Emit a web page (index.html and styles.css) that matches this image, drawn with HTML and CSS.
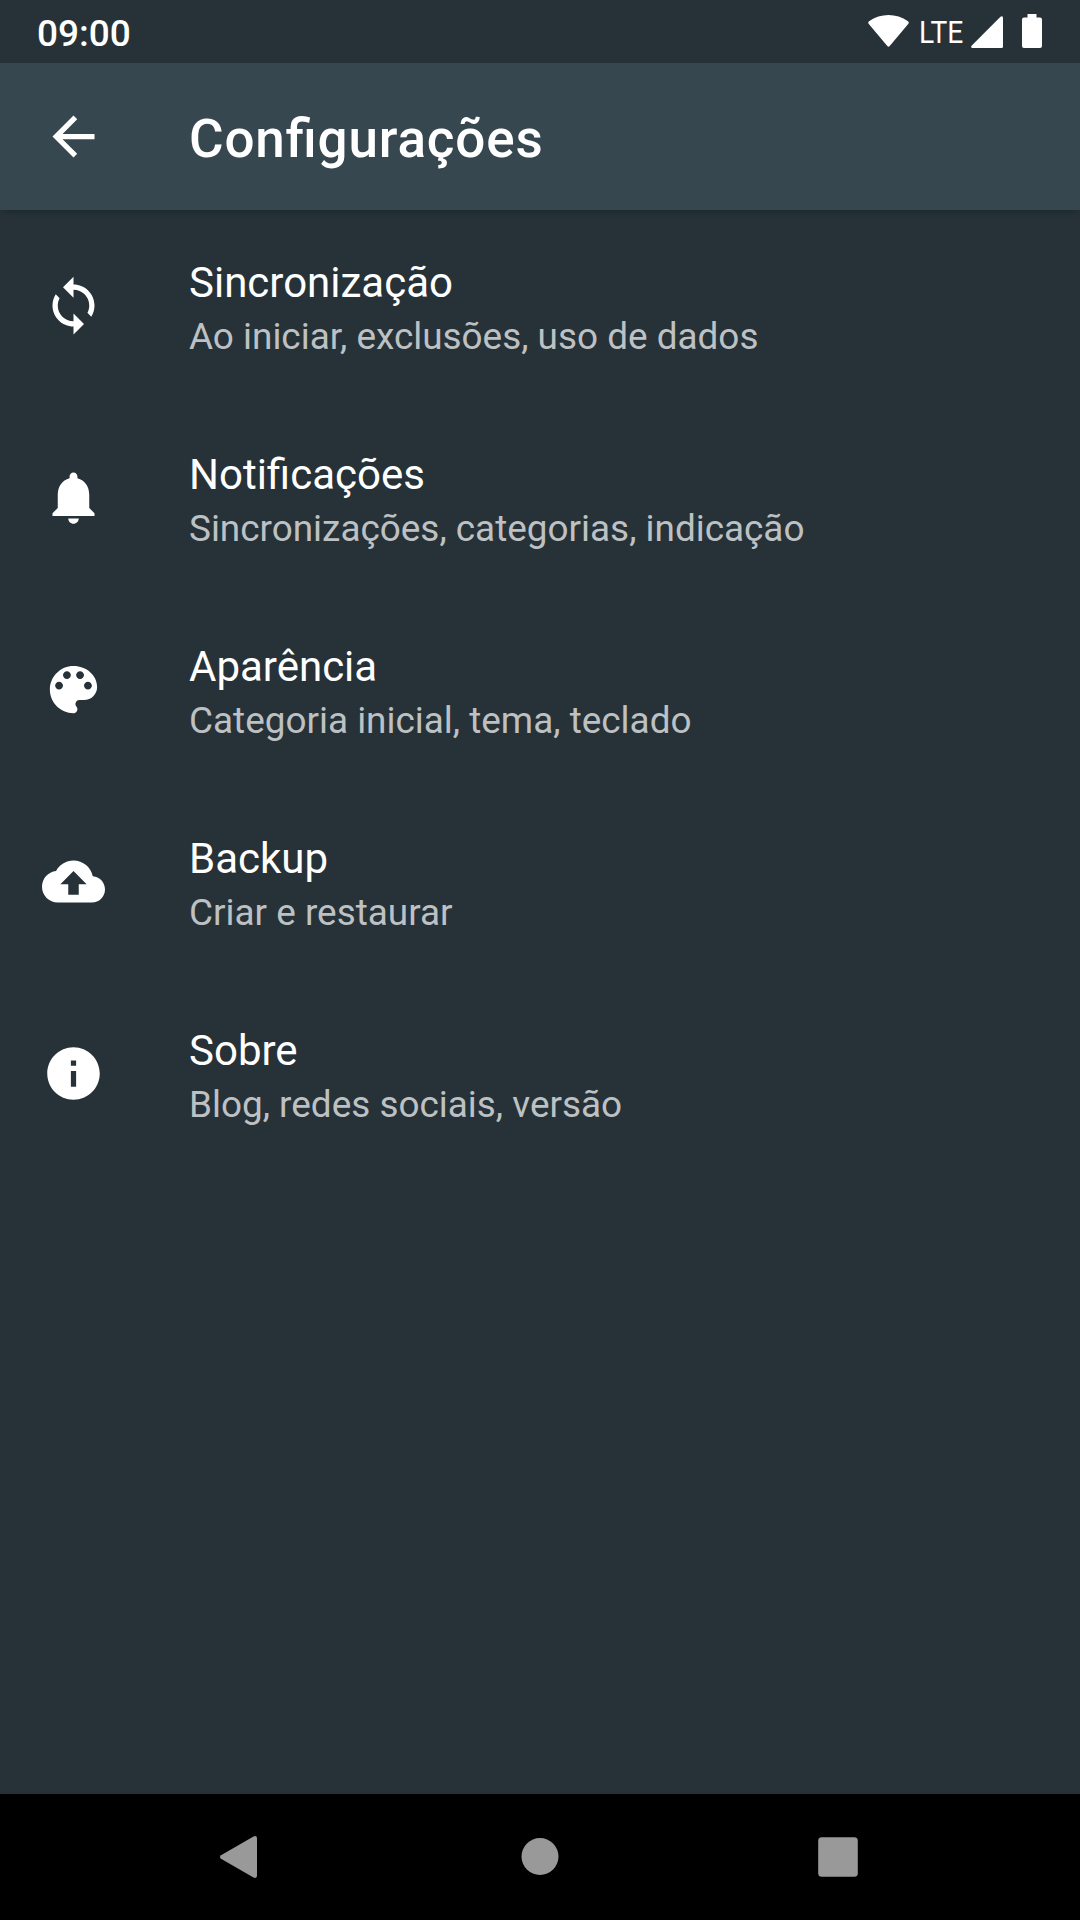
FILE: index.html
```html
<!DOCTYPE html>
<html lang="pt-BR">
<head>
<meta charset="utf-8">
<title>Configurações</title>
<link rel="stylesheet" href="styles.css">
</head>
<body>
<div class="screen">
  <div class="status">
    <span class="clock">09:00</span>
    <div class="signals">
      <svg class="wifi" viewBox="0 0 41 32"><path d="M.8 8.900Q-.5 7.500 1 6.300C12.500-2 28.500-2 40 6.300Q41.500 7.500 40.200 8.900L21.700 31Q20.500 32.300 19.300 31Z"/></svg>
      <span class="lte">LTE</span>
      <svg class="cell" viewBox="0 0 32 32"><path d="M1.500 32Q-.8 31.500.8 29.500L29.500.8Q31.500-.5 32 1.500V30.500Q32 32 30.500 32Z"/></svg>
      <svg class="battery" viewBox="0 0 20 34"><path d="M5.500 0h9v3.500h3.500q2 0 2 2v26.500q0 2-2 2H2q-2 0-2-2V5.500q0-2 2-2h3.500Z"/></svg>
    </div>
  </div>
  <header class="toolbar">
    <svg class="icon" viewBox="0 0 24 24"><path d="M20 11H7.830l5.590-5.590L12 4l-8 8 8 8 1.410-1.410L7.830 13H20v-2z"/></svg>
    <h1>Configurações</h1>
  </header>
  <main class="list">
    <div class="item">
      <svg class="icon" viewBox="0 0 24 24"><path d="M12 4V1L8 5l4 4V6c3.310 0 6 2.690 6 6 0 1.010-.25 1.970-.7 2.800l1.460 1.460C19.540 15.030 20 13.570 20 12c0-4.420-3.580-8-8-8zm0 14c-3.310 0-6-2.690-6-6 0-1.010.25-1.970.7-2.800L5.240 7.740C4.460 8.970 4 10.430 4 12c0 4.420 3.580 8 8 8v3l4-4-4-4v3z"/></svg>
      <div class="text"><div class="title">Sincronização</div><div class="summary">Ao iniciar, exclusões, uso de dados</div></div>
    </div>
    <div class="item">
      <svg class="icon" viewBox="0 0 24 24"><path d="M12 22c1.100 0 2-.9 2-2h-4c0 1.100.89 2 2 2zm6-6v-5c0-3.070-1.640-5.640-4.500-6.320V4c0-.83-.67-1.500-1.500-1.500s-1.500.67-1.500 1.500v.68C7.630 5.360 6 7.920 6 11v5l-2 2v1h16v-1l-2-2z"/></svg>
      <div class="text"><div class="title">Notificações</div><div class="summary">Sincronizações, categorias, indicação</div></div>
    </div>
    <div class="item">
      <svg class="icon" viewBox="0 0 24 24"><path d="M12 3c-4.970 0-9 4.030-9 9s4.030 9 9 9c.83 0 1.500-.67 1.500-1.500 0-.39-.15-.74-.39-1.010-.23-.26-.38-.61-.38-.99 0-.83.67-1.500 1.500-1.500H16c2.760 0 5-2.240 5-5 0-4.420-4.030-8-9-8zm-5.500 9c-.83 0-1.500-.67-1.500-1.500S5.670 9 6.500 9 8 9.670 8 10.500 7.330 12 6.500 12zm3-4C8.670 8 8 7.330 8 6.500S8.670 5 9.500 5s1.500.67 1.500 1.500S10.330 8 9.500 8zm5 0c-.83 0-1.500-.67-1.500-1.500S13.670 5 14.500 5s1.500.67 1.500 1.500S15.330 8 14.500 8zm3 4c-.83 0-1.500-.67-1.500-1.500S16.670 9 17.500 9s1.500.67 1.500 1.500-.67 1.500-1.500 1.500z"/></svg>
      <div class="text"><div class="title">Aparência</div><div class="summary">Categoria inicial, tema, teclado</div></div>
    </div>
    <div class="item">
      <svg class="icon" viewBox="0 0 24 24"><path d="M19.350 10.040C18.670 6.590 15.640 4 12 4 9.110 4 6.600 5.640 5.350 8.040 2.340 8.360 0 10.910 0 14c0 3.310 2.690 6 6 6h13c2.760 0 5-2.240 5-5 0-2.640-2.050-4.780-4.650-4.960zM14 13v4h-4v-4H7l5-5 5 5h-3z"/></svg>
      <div class="text"><div class="title">Backup</div><div class="summary">Criar e restaurar</div></div>
    </div>
    <div class="item">
      <svg class="icon" viewBox="0 0 24 24"><path d="M12 2C6.480 2 2 6.480 2 12s4.480 10 10 10 10-4.480 10-10S17.520 2 12 2zm1 15h-2v-6h2v6zm0-8h-2V7h2v2z"/></svg>
      <div class="text"><div class="title">Sobre</div><div class="summary">Blog, redes sociais, versão</div></div>
    </div>
  </main>
  <nav class="navbar">
    <svg viewBox="0 0 44 44"><path d="M38 3.500V40.500Q38 44 34.500 42.500L2 23.800Q0 22 2 20.200L34.500 1.500Q38 0 38 3.500Z"/></svg>
    <svg viewBox="0 0 44 44"><circle cx="22" cy="21.500" r="18.500"/></svg>
    <svg viewBox="0 0 44 44"><rect x="2.200" y="2.200" width="39.600" height="39.600" rx="3.500"/></svg>
  </nav>
</div>
</body>
</html>
```
FILE: styles.css
```css
* { box-sizing: border-box; }
body { margin: 0; background: #263238; font-family: Roboto, sans-serif; color: #fff; }
svg { display: block; fill: #fff; flex: none; }
.screen { width: 1080px; height: 1920px; display: flex; flex-direction: column; overflow: hidden; }
.status { height: 63px; flex: none; display: flex; align-items: flex-start; justify-content: space-between; padding: 0 38px 0 37px; }
.clock { font-size: 37px; font-weight: 500; line-height: 62px; padding-top: 3px; }
.signals { display: flex; align-items: flex-end; height: 48px; }
.wifi { width: 41px; height: 32px; margin: 0 10px 1px 0; }
.lte { width: 45px; font-size: 32px; line-height: 38px; margin: 0 7px -3px 0; transform: scaleX(.88); transform-origin: left; }
.cell { width: 32px; height: 32px; margin-right: 19px; }
.battery { width: 20px; height: 34px; }
.toolbar { height: 147px; flex: none; background: #37474f; display: flex; align-items: center; gap: 84px; padding: 0 42px; box-shadow: 0 5px 6px -3px rgba(0,0,0,.2); }
.icon { width: 63px; height: 63px; }
h1 { margin: 5px 0 0; font-size: 53px; font-weight: 500; line-height: 62px; letter-spacing: .85px; font-feature-settings: "liga" 1; }
.list { flex: 1; }
.item { height: 192px; display: flex; align-items: center; gap: 84px; padding: 0 42px; }
.item .icon { margin-top: -1px; }
.text { padding-top: 5px; }
.title { font-size: 42px; line-height: 50px; }
.summary { font-size: 36.900px; line-height: 44px; margin-top: 7px; color: #bec1c3; }
.navbar { height: 126px; flex: none; background: #000; display: flex; align-items: center; justify-content: space-between; padding: 0 220px 0 219px; }
.navbar svg { width: 44px; height: 44px; fill: #999; }
```
